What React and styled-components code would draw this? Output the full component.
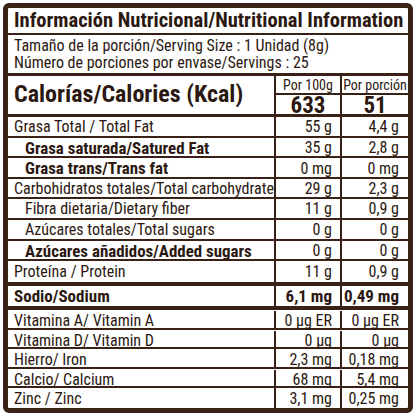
import React from 'react'
import styled, { createGlobalStyle } from 'styled-components'

const ink = '#2b1810'
const line = '#3a2115'

const GlobalStyle = createGlobalStyle`
    *, *::before, *::after {
        box-sizing: border-box;
    }
    html, body {
        margin: 0;
        padding: 0;
        background: #ffffff;
    }
    body {
        font-family: "Roboto Condensed", "Liberation Sans", sans-serif;
        color: ${ink};
    }
`

const cols = '266px 66px 68px'

const Frame = styled.div`
    margin: 3px;
    width: 410px;
    border: 5px solid ${line};
    border-radius: 6px;
    background: #fff;
`

const Title = styled.div`
    height: 27px;
    padding: 0 0 1px 6px;
    display: flex;
    align-items: center;
    font-size: 20.5px;
    font-weight: bold;
    border-bottom: 2px solid ${line};
    white-space: nowrap;
`

const Serving = styled.div`
    height: 41px;
    padding-left: 6px;
    display: flex;
    flex-direction: column;
    justify-content: center;
    font-size: 16px;
    line-height: 17.5px;
    border-bottom: 3px solid ${line};
`

const CalGrid = styled.div`
    display: grid;
    grid-template-columns: ${cols};
    grid-template-rows: 17px 2px 19px;
    height: 41px;
    border-bottom: 3px solid ${line};
`

const CalLabel = styled.div`
    grid-row: 1 / 4;
    padding: 0 0 2px 6px;
    display: flex;
    align-items: center;
    font-size: 24px;
    font-weight: bold;
    white-space: nowrap;
`

const ColHead = styled.div`
    border-left: 2px solid ${line};
    display: flex;
    align-items: center;
    justify-content: center;
    font-size: 14px;
    white-space: nowrap;
`

const HeadRule = styled.div`
    grid-column: 2 / 4;
    background: ${line};
`

const CalValue = styled.div`
    border-left: 2px solid ${line};
    display: flex;
    align-items: center;
    justify-content: center;
    padding-top: 2px;
    font-size: 23px;
    font-weight: bold;
`

const Row = styled.div`
    display: grid;
    grid-template-columns: ${cols};
    height: ${(p) => p.$h}px;
    padding-top: ${(p) => p.$shift || 0}px;
    border-bottom: ${(p) => p.$rule}px solid ${line};
    font-size: ${(p) => (p.$strong ? 17 : 16)}px;
    font-weight: ${(p) => (p.$strong ? 'bold' : 'normal')};

    &:last-child {
        border-bottom: ${(p) => (p.$keep ? p.$rule : 0)}px solid ${line};
    }
`

const Label = styled.div`
    display: flex;
    align-items: center;
    padding-left: ${(p) => (p.$indent ? 17 : 6)}px;
    font-weight: ${(p) => (p.$bold ? 'bold' : 'inherit')};
    font-size: ${(p) => (p.$bold ? '16.9px' : 'inherit')};
    white-space: nowrap;
`

const Value = styled.div`
    border-left: 2px solid ${line};
    display: flex;
    align-items: center;
    justify-content: flex-end;
    padding-right: ${(p) => p.$pad}px;
    white-space: nowrap;
`

const rows = [
    { label: 'Grasa Total / Total Fat', a: '55 g', b: '4,4 g' },
    { label: 'Grasa saturada/Satured Fat', a: '35 g', b: '2,8 g', indent: true, bold: true },
    { label: 'Grasa trans/Trans fat', a: '0 mg', b: '0 mg', indent: true, bold: true },
    { label: 'Carbohidratos totales/Total carbohydrate', a: '29 g', b: '2,3 g' },
    { label: 'Fibra dietaria/Dietary fiber', a: '11 g', b: '0,9 g', indent: true },
    { label: 'Azúcares totales/Total sugars', a: '0 g', b: '0 g', indent: true },
    { label: 'Azúcares añadidos/Added sugars', a: '0 g', b: '0 g', indent: true, bold: true },
]

const vitamins = [
    { label: 'Vitamina A/ Vitamin A', a: '0 µg ER', b: '0 µg ER' },
    { label: 'Vitamina D/ Vitamin D', a: '0 µg', b: '0 µg' },
    { label: 'Hierro/ Iron', a: '2,3 mg', b: '0,18 mg' },
    { label: 'Calcio/ Calcium', a: '68 mg', b: '5,4 mg' },
    { label: 'Zinc / Zinc', a: '3,1 mg', b: '0,25 mg' },
]

const Section = styled.div``

const NutrientRow = ({ item, h, rule = 2, strong, keep, shift }) => (
    <Row $h={h} $rule={rule} $strong={strong} $keep={keep} $shift={shift}>
        <Label $indent={item.indent} $bold={item.bold}>
            {item.label}
        </Label>
        <Value $pad={8}>{item.a}</Value>
        <Value $pad={9}>{item.b}</Value>
    </Row>
)

const App = () => {
    return (
        <>
            <GlobalStyle />
            <Frame>
                <Title>Información Nutricional/Nutritional Information</Title>
                <Serving>
                    <div>Tamaño de la porción/Serving Size : 1 Unidad (8g)</div>
                    <div>Número de porciones por envase/Servings : 25</div>
                </Serving>
                <CalGrid>
                    <CalLabel>Calorías/Calories (Kcal)</CalLabel>
                    <ColHead>Por 100g</ColHead>
                    <ColHead>Por porción</ColHead>
                    <HeadRule />
                    <CalValue>633</CalValue>
                    <CalValue>51</CalValue>
                </CalGrid>
                <Section>
                    {rows.map((r) => (
                        <NutrientRow key={r.label} item={r} h={20.6} />
                    ))}
                    <NutrientRow
                        item={{ label: 'Proteína / Protein', a: '11 g', b: '0,9 g' }}
                        h={25}
                        rule={4}
                        keep
                    />
                </Section>
                <NutrientRow
                    item={{ label: 'Sodio/Sodium', a: '6,1 mg', b: '0,49 mg' }}
                    h={24}
                    rule={4}
                    strong
                    keep
                />
                <Section>
                    {vitamins.map((r) => (
                        <NutrientRow key={r.label} item={r} h={19.56} shift={1} />
                    ))}
                </Section>
            </Frame>
        </>
    )
}

export default App
